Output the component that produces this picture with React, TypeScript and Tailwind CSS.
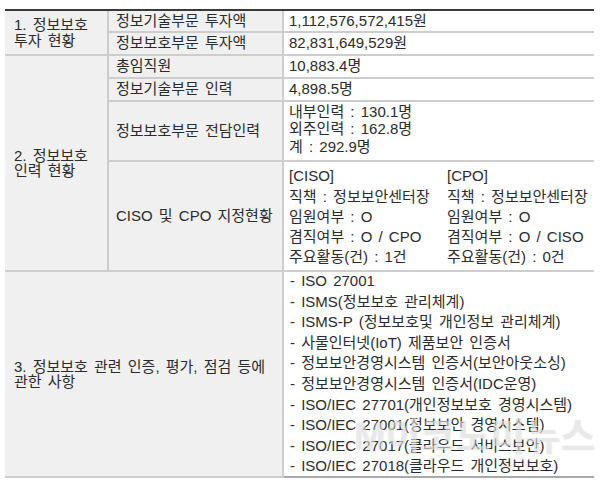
const font = { fontFamily: '"Liberation Sans", "Noto Sans CJK KR", sans-serif' };

const isoList = [
  "ISO 27001",
  "ISMS(정보보호 관리체계)",
  "ISMS-P (정보보호및 개인정보 관리체계)",
  "사물인터넷(IoT) 제품보안 인증서",
  "정보보안경영시스템 인증서(보안아웃소싱)",
  "정보보안경영시스템 인증서(IDC운영)",
  "ISO/IEC 27701(개인정보보호 경영시스템)",
  "ISO/IEC 27001(정보보안 경영시스템)",
  "ISO/IEC 27017(클라우드 서비스보안)",
  "ISO/IEC 27018(클라우드 개인정보보호)",
];

const cisoRows = [
  ["[CISO]", "[CPO]"],
  ["직책 : 정보보안센터장", "직책 : 정보보안센터장"],
  ["임원여부 : O", "임원여부 : O"],
  ["겸직여부 : O / CPO", "겸직여부 : O / CISO"],
  ["주요활동(건) : 1건", "주요활동(건) : 0건"],
];

const line = "border-[#cdcdcd]";
const head = `flex items-center bg-[#f0f0f0] border-b-2 border-r-2 ${line}`;
const sub = `flex items-center bg-[#f0f0f0] border-b-2 border-r-2 ${line} pl-[7px]`;
const val = `flex items-center border-b-2 ${line} pl-[5px]`;

export default function App() {
  return (
    <div className="relative h-[488px] w-[600px] overflow-hidden bg-white pt-[9px] text-[15px] text-[#2b2b2b] [word-spacing:2px]" style={font}>
      <div className="ml-[5px] grid w-[589px] grid-cols-[104px_175px_310px] grid-rows-[22px_23px_23px_23px_60px_110px_206px] border-t-2 border-[#3a3a3a]">
        <div className={`${head} row-span-2 pl-[9px] leading-[16px]`}>
          <div>
            1. 정보보호
            <br />
            투자 현황
          </div>
        </div>
        <div className={sub}>정보기술부문 투자액</div>
        <div className={val}>1,112,576,572,415원</div>
        <div className={sub}>정보보호부문 투자액</div>
        <div className={val}>82,831,649,529원</div>

        <div className={`${head} row-span-4 pl-[9px] leading-[15px]`}>
          <div>
            2. 정보보호
            <br />
            인력 현황
          </div>
        </div>
        <div className={sub}>총임직원</div>
        <div className={val}>10,883.4명</div>
        <div className={sub}>정보기술부문 인력</div>
        <div className={val}>4,898.5명</div>
        <div className={sub}>정보보호부문 전담인력</div>
        <div className={`${val} leading-[17.5px]`}>
          <div className="-mt-[4px]">
            <div>내부인력 : 130.1명</div>
            <div>외주인력 : 162.8명</div>
            <div>계 : 292.9명</div>
          </div>
        </div>
        <div className={sub}>CISO 및 CPO 지정현황</div>
        <div className={`${val} leading-[20.25px]`}>
          <div className="grid grid-cols-[158px_1fr] pt-[2px]">
            {cisoRows.map(([a, b], i) => (
              <div key={i} className="contents">
                <div>{a}</div>
                <div>{b}</div>
              </div>
            ))}
          </div>
        </div>

        <div className={`${head} col-span-2 pl-[9px] leading-[15px]`}>
          <div>
            3. 정보보호 관련 인증, 평가, 점검 등에
            <br />
            관한 사항
          </div>
        </div>
        <div className="flex items-center border-b-2 border-[#a9a9a9] pl-[6px] leading-[20.55px]">
          <div>
            {isoList.map((t) => (
              <div key={t} className="whitespace-nowrap">- {t}</div>
            ))}
          </div>
        </div>
      </div>

      <div
        className="pointer-events-none absolute left-[354px] top-[412px] whitespace-nowrap text-[38px] font-bold leading-[50px] text-white/55 [word-spacing:0]"
        style={{ textShadow: "0 0 1px rgba(0,0,0,0.2)" }}
      >
        M이코노미뉴스
      </div>
    </div>
  );
}
